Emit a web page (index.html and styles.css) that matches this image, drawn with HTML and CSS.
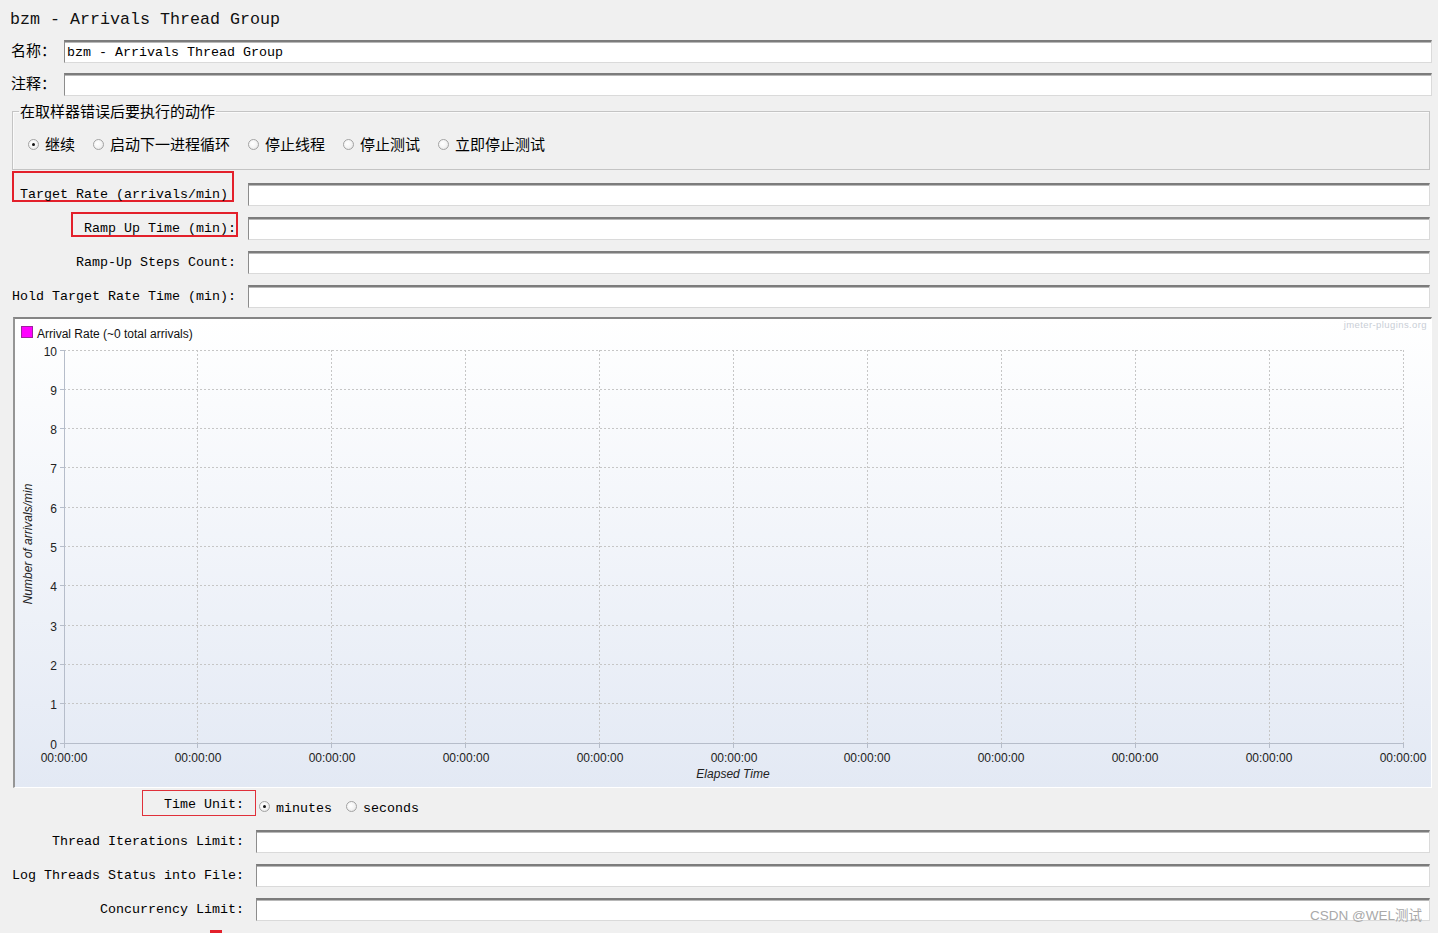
FILE: index.html
```html
<!DOCTYPE html>
<html lang="zh">
<head>
<meta charset="utf-8">
<title>bzm - Arrivals Thread Group</title>
<link rel="stylesheet" href="styles.css">
</head>
<body>
<div class="page">
  <div class="title">bzm - Arrivals Thread Group</div>

  <div class="row row-name">
    <label class="cjk-label">名称：</label>
    <div class="field field-text">bzm - Arrivals Thread Group</div>
  </div>
  <div class="row row-comment">
    <label class="cjk-label">注释：</label>
    <div class="field"></div>
  </div>

  <fieldset class="group">
    <legend>在取样器错误后要执行的动作</legend>
    <div class="radios">
      <span class="opt"><span class="radio on"></span>继续</span>
      <span class="opt"><span class="radio"></span>启动下一进程循环</span>
      <span class="opt"><span class="radio"></span>停止线程</span>
      <span class="opt"><span class="radio"></span>停止测试</span>
      <span class="opt"><span class="radio"></span>立即停止测试</span>
    </div>
  </fieldset>

  <div class="param p-target">
    <div class="plabel left"><span class="mark-thick mk-target">Target Rate (arrivals/min)</span></div>
    <div class="field pfield"></div>
  </div>
  <div class="param p-ramp">
    <div class="plabel"><span class="mark-thick mk-ramp">Ramp Up Time (min):</span></div>
    <div class="field pfield"></div>
  </div>
  <div class="param p-plain">
    <div class="plabel"><span class="ltext">Ramp-Up Steps Count:</span></div>
    <div class="field pfield"></div>
  </div>
  <div class="param p-plain">
    <div class="plabel"><span class="ltext">Hold Target Rate Time (min):</span></div>
    <div class="field pfield"></div>
  </div>

  <div class="chart">
    <svg class="chart-svg" width="1416" height="468" viewBox="15 320 1416 468" xmlns="http://www.w3.org/2000/svg">
      <defs>
        <linearGradient id="bg" x1="0" y1="0" x2="0" y2="1">
          <stop offset="0" stop-color="#ffffff"/>
          <stop offset="1" stop-color="#e3e9f4"/>
        </linearGradient>
      </defs>
      <rect x="15" y="320" width="1416" height="468" fill="url(#bg)"/>
      <text class="brand" x="1427" y="329" text-anchor="end">jmeter-plugins.org</text>
      <rect x="21.5" y="327.5" width="11" height="11" fill="#ff00ff" stroke="#a020a0"/>
      <text class="legend" x="37" y="339">Arrival Rate (~0 total arrivals)</text>

      <g class="grid" stroke="#c6c6c6" stroke-dasharray="2 2" fill="none">
        <line x1="64" y1="351.5" x2="1404" y2="351.5"/>
        <line x1="64" y1="390.5" x2="1404" y2="390.5"/>
        <line x1="64" y1="429.5" x2="1404" y2="429.5"/>
        <line x1="64" y1="468.5" x2="1404" y2="468.5"/>
        <line x1="64" y1="508.5" x2="1404" y2="508.5"/>
        <line x1="64" y1="547.5" x2="1404" y2="547.5"/>
        <line x1="64" y1="586.5" x2="1404" y2="586.5"/>
        <line x1="64" y1="626.5" x2="1404" y2="626.5"/>
        <line x1="64" y1="665.5" x2="1404" y2="665.5"/>
        <line x1="64" y1="704.5" x2="1404" y2="704.5"/>
        <line x1="197.5" y1="351" x2="197.5" y2="744"/>
        <line x1="331.5" y1="351" x2="331.5" y2="744"/>
        <line x1="465.5" y1="351" x2="465.5" y2="744"/>
        <line x1="599.5" y1="351" x2="599.5" y2="744"/>
        <line x1="733.5" y1="351" x2="733.5" y2="744"/>
        <line x1="867.5" y1="351" x2="867.5" y2="744"/>
        <line x1="1001.5" y1="351" x2="1001.5" y2="744"/>
        <line x1="1135.5" y1="351" x2="1135.5" y2="744"/>
        <line x1="1269.5" y1="351" x2="1269.5" y2="744"/>
        <line x1="1403.5" y1="351" x2="1403.5" y2="744"/>
      </g>

      <g class="axis" stroke="#b6bdca" fill="none">
        <line x1="64.5" y1="351" x2="64.5" y2="745"/>
        <line x1="64" y1="744.5" x2="1404" y2="744.5"/>
        <line x1="60" y1="351.5" x2="64" y2="351.5"/>
        <line x1="60" y1="390.5" x2="64" y2="390.5"/>
        <line x1="60" y1="429.5" x2="64" y2="429.5"/>
        <line x1="60" y1="468.5" x2="64" y2="468.5"/>
        <line x1="60" y1="508.5" x2="64" y2="508.5"/>
        <line x1="60" y1="547.5" x2="64" y2="547.5"/>
        <line x1="60" y1="586.5" x2="64" y2="586.5"/>
        <line x1="60" y1="626.5" x2="64" y2="626.5"/>
        <line x1="60" y1="665.5" x2="64" y2="665.5"/>
        <line x1="60" y1="704.5" x2="64" y2="704.5"/>
        <line x1="60" y1="744.5" x2="64" y2="744.5"/>
        <line x1="64.5" y1="744" x2="64.5" y2="749"/>
        <line x1="197.5" y1="744" x2="197.5" y2="749"/>
        <line x1="331.5" y1="744" x2="331.5" y2="749"/>
        <line x1="465.5" y1="744" x2="465.5" y2="749"/>
        <line x1="599.5" y1="744" x2="599.5" y2="749"/>
        <line x1="733.5" y1="744" x2="733.5" y2="749"/>
        <line x1="867.5" y1="744" x2="867.5" y2="749"/>
        <line x1="1001.5" y1="744" x2="1001.5" y2="749"/>
        <line x1="1135.5" y1="744" x2="1135.5" y2="749"/>
        <line x1="1269.5" y1="744" x2="1269.5" y2="749"/>
        <line x1="1403.5" y1="744" x2="1403.5" y2="749"/>
      </g>

      <g class="ticks" text-anchor="end">
        <text x="57" y="357">10</text>
        <text x="57" y="396">9</text>
        <text x="57" y="435">8</text>
        <text x="57" y="474">7</text>
        <text x="57" y="514">6</text>
        <text x="57" y="553">5</text>
        <text x="57" y="592">4</text>
        <text x="57" y="632">3</text>
        <text x="57" y="671">2</text>
        <text x="57" y="710">1</text>
        <text x="57" y="750">0</text>
      </g>
      <g class="ticks" text-anchor="middle">
        <text x="64" y="763">00:00:00</text>
        <text x="198" y="763">00:00:00</text>
        <text x="332" y="763">00:00:00</text>
        <text x="466" y="763">00:00:00</text>
        <text x="600" y="763">00:00:00</text>
        <text x="734" y="763">00:00:00</text>
        <text x="867" y="763">00:00:00</text>
        <text x="1001" y="763">00:00:00</text>
        <text x="1135" y="763">00:00:00</text>
        <text x="1269" y="763">00:00:00</text>
        <text x="1403" y="763">00:00:00</text>
      </g>
      <text class="axis-title" x="733" y="779" text-anchor="middle">Elapsed Time</text>
      <text class="axis-title" x="0" y="0" text-anchor="middle" transform="translate(32 545) rotate(-90)">Number of arrivals/min</text>
    </svg>
  </div>

  <div class="param2 p-unit">
    <div class="plabel2"><span class="mark-thin">Time Unit:</span></div>
    <div class="unit-radios">
      <span class="opt2"><span class="radio on"></span>minutes</span>
      <span class="opt2"><span class="radio"></span>seconds</span>
    </div>
  </div>
  <div class="param2 p-iter">
    <div class="plabel2"><span class="ltext">Thread Iterations Limit:</span></div>
    <div class="field pfield2"></div>
  </div>
  <div class="param2 p-plain2">
    <div class="plabel2"><span class="ltext">Log Threads Status into File:</span></div>
    <div class="field pfield2"></div>
  </div>
  <div class="param2 p-plain2">
    <div class="plabel2"><span class="ltext">Concurrency Limit:</span></div>
    <div class="field pfield2"></div>
  </div>
</div>
<div class="watermark">CSDN @WEL测试</div>
<div class="red-stub"></div>
</body>
</html>
```

FILE: styles.css
```css
html, body {
  margin: 0;
  padding: 0;
  background: #f0f0f0;
  height: 100%;
  overflow: hidden;
}

body {
  font-family: "Liberation Mono", "DejaVu Sans Mono", monospace;
  color: #000;
}

.page {
  padding: 3px 6px 0 10px;
}

.title {
  height: 30px;
  line-height: 34px;
  font-size: 16.67px;
  color: #111;
}

.row {
  display: flex;
  align-items: center;
  height: 23px;
}

.row-name { margin-top: 7px; }
.row-comment { margin-top: 10px; }

.cjk-label {
  width: 53px;
  padding-left: 1px;
  padding-bottom: 4px;
  font-family: "Noto Sans CJK SC", sans-serif;
  font-size: 15px;
  line-height: 20px;
  color: #000;
}

.field {
  box-sizing: border-box;
  height: 23px;
  background: #fff;
  border-top: 2px solid #7c7c7c;
  border-left: 1px solid #8c8c8c;
  border-right: 1px solid #dadada;
  border-bottom: 1px solid #dadada;
  box-shadow: inset 0 1px 0 #b8b8b8;
}

.row .field { flex: 1; }

.field-text {
  font-size: 13.33px;
  line-height: 21px;
  padding-left: 2px;
  white-space: nowrap;
}

.group {
  margin: 5px 2px 0 2px;
  padding: 13px 0 15px 15px;
  border: 1px solid #c4c4c4;
  box-shadow: inset 1px 1px 0 #fafafa;
  min-width: 0;
}

.group legend {
  font-family: "Noto Sans CJK SC", sans-serif;
  font-size: 15px;
  line-height: 20px;
  padding: 0 1px;
  margin-left: -9px;
  color: #000;
}

.radios {
  display: flex;
  align-items: center;
  height: 20px;
  gap: 18px;
  font-family: "Noto Sans CJK SC", sans-serif;
  font-size: 15px;
  line-height: 20px;
}

.opt, .opt2 {
  display: inline-flex;
  align-items: center;
  gap: 6px;
  white-space: nowrap;
}

.radio {
  position: relative;
  box-sizing: border-box;
  width: 11px;
  height: 11px;
  border-radius: 50%;
  border: 1px solid #a3a3a3;
  background: radial-gradient(circle at 40% 40%, #ffffff 0%, #f4f4f4 50%, #dcdcdc 100%);
  flex: none;
}

.radio.on::after {
  content: "";
  position: absolute;
  left: 3px;
  top: 3px;
  width: 3px;
  height: 3px;
  border-radius: 50%;
  background: #111;
}

.param {
  display: flex;
  align-items: flex-start;
  height: 34px;
}

.p-target { margin-top: 1px; height: 35px; }

.plabel {
  box-sizing: border-box;
  width: 238px;
  flex: none;
  display: flex;
  justify-content: flex-end;
  padding-right: 12px;
}

.plabel.left {
  justify-content: flex-start;
  padding-left: 2px;
  padding-right: 0;
}

.ltext {
  font-size: 13.33px;
  line-height: 16px;
  white-space: nowrap;
  margin-top: 15px;
}

.mark-thick {
  display: block;
  font-size: 13.33px;
  line-height: 16px;
  white-space: nowrap;
  border: 2px solid #e3202b;
}

.mk-target {
  height: 13px;
  padding: 14px 4px 0 6px;
}

.mk-ramp {
  height: 14px;
  margin-top: 6px;
  margin-right: -2px;
  padding: 7px 0 0 11px;
}

.pfield {
  flex: 1;
  align-self: flex-end;
  margin-right: 2px;
}

.chart {
  box-sizing: border-box;
  margin: 9px 0 0 3px;
  height: 471px;
  border-top: 2px solid #858585;
  border-left: 2px solid #959595;
  border-right: 1px solid #ffffff;
  border-bottom: 1px solid #ffffff;
  overflow: hidden;
}

.chart-svg {
  display: block;
}

.chart-svg text {
  font-family: "Liberation Sans", Arial, sans-serif;
  font-size: 12px;
  fill: #222;
}

.chart-svg .legend {
  font-size: 12px;
  fill: #111;
}

.chart-svg .brand {
  font-size: 9.5px;
  fill: #c9ced6;
  letter-spacing: 0.4px;
}

.chart-svg .axis-title {
  font-style: italic;
  font-size: 12px;
  fill: #222;
}

.param2 {
  display: flex;
  align-items: flex-start;
  height: 34px;
}

.p-unit { margin-top: 2px; height: 26px; }
.p-iter { height: 37px; }
.p-iter .ltext { margin-top: 18px; }

.plabel2 {
  box-sizing: border-box;
  width: 246px;
  flex: none;
  display: flex;
  justify-content: flex-end;
  padding-right: 12px;
}

.p-unit .plabel2 { padding-right: 0; }

.mark-thin {
  display: block;
  height: 18px;
  font-size: 13.33px;
  line-height: 16px;
  white-space: nowrap;
  border: 1px solid #e0303a;
  padding: 6px 11px 0 21px;
}

.unit-radios {
  display: flex;
  align-items: flex-start;
  gap: 14px;
  margin-left: 3px;
  margin-top: 11px;
  height: 16px;
  font-size: 13.33px;
  line-height: 16px;
}

.unit-radios .opt2 {
  align-items: flex-start;
}

.unit-radios .radio {
  margin-top: 0;
}

.pfield2 {
  flex: 1;
  align-self: flex-end;
  margin-right: 2px;
}

.watermark {
  position: absolute;
  left: 1310px;
  top: 906px;
  font-family: "Liberation Sans", "Noto Sans CJK SC", sans-serif;
  font-size: 13.5px;
  line-height: 20px;
  color: #a9a9a9;
  white-space: nowrap;
}

.red-stub {
  position: absolute;
  left: 210px;
  top: 930px;
  width: 12px;
  height: 3px;
  background: #e3202b;
}
```
